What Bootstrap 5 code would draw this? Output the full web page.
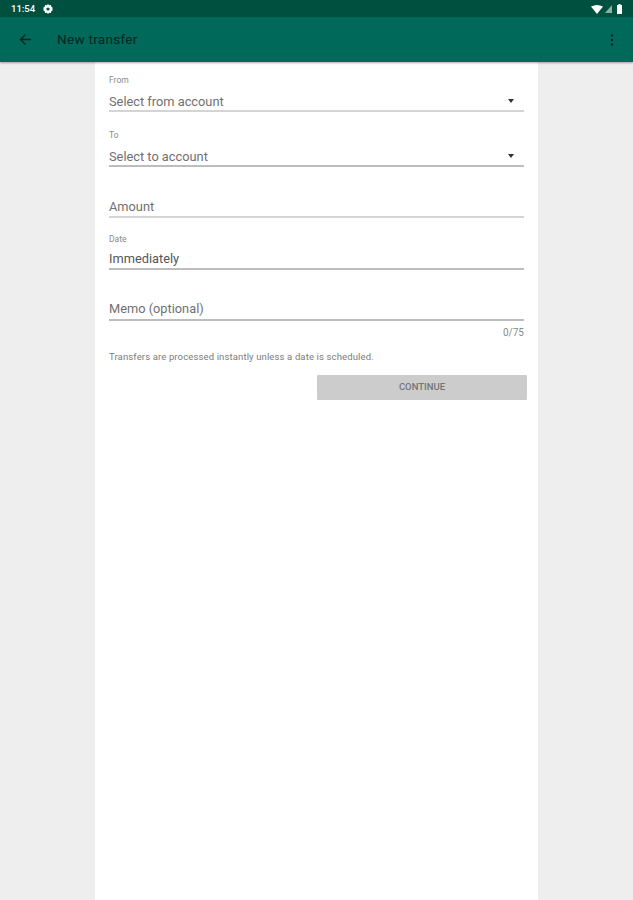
<!DOCTYPE html>
<html lang="en">
<head>
  <meta charset="UTF-8">
  <title>New transfer</title>
  <meta name="viewport" content="width=device-width, initial-scale=1">
  <link href="https://cdn.jsdelivr.net/npm/bootstrap@5.3.2/dist/css/bootstrap.min.css" rel="stylesheet">
  <style>
    html, body { height: 900px; overflow: hidden; }
    body { background: #eeeeee; font-family: Roboto, "Liberation Sans", sans-serif; }
    .status-strip { height: 17px; background: #00503f; color: #fff; font-size: 9.5px; font-weight: 500; padding: 1px 11px 0; }
    .status-icons { gap: 2px; }
    .status-battery { margin-left: 3px; }
    .app-bar { height: 45px; background: #00695a; padding: 0 19px 0 19px; box-shadow: 0 1px 2px rgba(0,0,0,.35); position: relative; }
    .app-title { font-size: 13.5px; font-weight: 400; color: #04261f; margin-left: 25px; letter-spacing: .3px; }
    .sheet { width: 443px; height: 838px; margin-left: 95px; background: #fff; padding: 0 14px; }
    .field { border-bottom: 2px solid #d4d4d4; position: relative; }
    .field-dark { border-bottom-color: #bdbdbd; }
    .field-from { height: 50px; padding-top: 13px; }
    .field-to { height: 55px; padding-top: 18px; }
    .field-amount { height: 51px; padding-top: 31px; }
    .field-date { height: 52px; padding-top: 16px; }
    .field-memo { height: 51px; padding-top: 30px; }
    .field-label { font-size: 8.5px; line-height: 11px; color: #8a8a8a; height: 11px; }
    .field-value { font-size: 12.8px; line-height: 17px; color: #707070; margin-top: 7px; }
    .field-plain { margin-top: 0; }
    .field-date .field-value { margin-top: 5px; color: #555; }
    .caret-down { position: absolute; right: 10px; bottom: 7px; width: 0; height: 0; border: 3.5px solid transparent; border-top: 4px solid #333; border-bottom: 0; }
    .char-count { font-size: 10px; line-height: 13px; color: #8a8a8a; margin-top: 5px; }
    .help-line { font-size: 9.5px; line-height: 13px; color: #7c7c7c; margin-top: 11px; letter-spacing: .13px; }
    .continue-btn { width: 210px; height: 25px; margin: 12px -3px 0 auto; background: #cccccc; color: #757575; border: 0; border-radius: 1px; font-size: 9.5px; font-weight: 500; padding: 0; display: block; }
  </style>
</head>
<body>

<div class="status-strip d-flex align-items-center justify-content-between">
  <div class="d-flex align-items-center gap-2">
    <span>11:54</span>
    <svg width="10" height="10" viewBox="0 0 10 10"><path fill="#fff" d="M5 0l1.2 1.2 1.8-.2.3 1.7L10 4 9 5l1 1-1.7 1.3-.3 1.7-1.8-.2L5 10 3.8 8.8 2 9l-.3-1.7L0 6l1-1-1-1 1.7-1.3L2 1l1.8.2z"/><circle cx="5" cy="5" r="1.6" fill="#00503f"/></svg>
  </div>
  <div class="status-icons d-flex align-items-center">
    <svg width="12" height="9" viewBox="0 0 12 9"><path fill="#fff" d="M0 1.5Q6-1.5 12 1.5L6 9z"/></svg>
    <svg width="7" height="8" viewBox="0 0 7 8"><path fill="#fff" opacity=".55" d="M7 0v8H0z"/></svg>
    <svg class="status-battery" width="5" height="10" viewBox="0 0 5 10"><path fill="#fff" d="M1.5 0h2v1H5v9H0V1h1.5z"/></svg>
  </div>
</div>

<div class="app-bar d-flex align-items-center justify-content-between">
  <div class="d-flex align-items-center">
    <svg width="13" height="13" viewBox="0 0 13 13"><path fill="none" stroke="#04261f" stroke-width="1.4" d="M12 6.5H1.5M6.5 1.5l-5 5 5 5"/></svg>
    <span class="app-title">New transfer</span>
  </div>
  <svg width="4" height="12" viewBox="0 0 4 12"><g fill="#04261f"><circle cx="2" cy="1.5" r="1.2"/><circle cx="2" cy="6" r="1.2"/><circle cx="2" cy="10.5" r="1.2"/></g></svg>
</div>

<div class="sheet">
  <div class="field field-from">
    <div class="field-label">From</div>
    <div class="field-value">Select from account</div>
    <span class="caret-down"></span>
  </div>
  <div class="field field-to field-dark">
    <div class="field-label">To</div>
    <div class="field-value">Select to account</div>
    <span class="caret-down"></span>
  </div>
  <div class="field field-amount">
    <div class="field-value field-plain">Amount</div>
  </div>
  <div class="field field-date field-dark">
    <div class="field-label">Date</div>
    <div class="field-value">Immediately</div>
  </div>
  <div class="field field-memo field-dark">
    <div class="field-value field-plain">Memo (optional)</div>
  </div>
  <div class="char-count text-end">0/75</div>
  <div class="help-line">Transfers are processed instantly unless a date is scheduled.</div>
  <button class="continue-btn" type="button" disabled>CONTINUE</button>
</div>

<script src="https://cdn.jsdelivr.net/npm/bootstrap@5.3.2/dist/js/bootstrap.bundle.min.js"></script>
</body>
</html>
